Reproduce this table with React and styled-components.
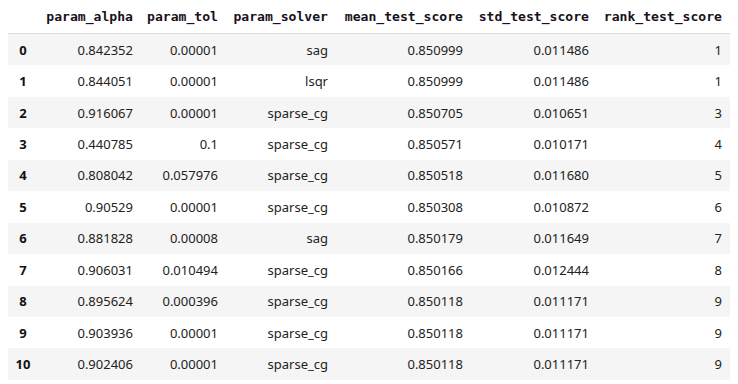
import React from "react";
import styled, { createGlobalStyle } from "styled-components";

const rows = [
	[0, "0.842352", "0.00001", "sag", "0.850999", "0.011486", 1],
	[1, "0.844051", "0.00001", "lsqr", "0.850999", "0.011486", 1],
	[2, "0.916067", "0.00001", "sparse_cg", "0.850705", "0.010651", 3],
	[3, "0.440785", "0.1", "sparse_cg", "0.850571", "0.010171", 4],
	[4, "0.808042", "0.057976", "sparse_cg", "0.850518", "0.011680", 5],
	[5, "0.90529", "0.00001", "sparse_cg", "0.850308", "0.010872", 6],
	[6, "0.881828", "0.00008", "sag", "0.850179", "0.011649", 7],
	[7, "0.906031", "0.010494", "sparse_cg", "0.850166", "0.012444", 8],
	[8, "0.895624", "0.000396", "sparse_cg", "0.850118", "0.011171", 9],
	[9, "0.903936", "0.00001", "sparse_cg", "0.850118", "0.011171", 9],
	[10, "0.902406", "0.00001", "sparse_cg", "0.850118", "0.011171", 9],
];

const columns = [
	{ name: "", width: 30 },
	{ name: "param_alpha", width: 103 },
	{ name: "param_tol", width: 85 },
	{ name: "param_solver", width: 110 },
	{ name: "mean_test_score", width: 135 },
	{ name: "std_test_score", width: 126 },
	{ name: "rank_test_score", width: 133 },
];

const GlobalStyle = createGlobalStyle`
	html, body {
		margin: 0;
		background: #fff;
	}
	body {
		padding: 0 8px;
		font-family: "Noto Sans", "Open Sans", sans-serif;
	}
`;

const App = () => {
	return (
		<>
			<GlobalStyle />
			<Table>
				<colgroup>
					{columns.map((c, i) => (
						<col key={i} style={{ width: c.width }} />
					))}
				</colgroup>
				<thead>
					<tr>
						{columns.map((c, i) => (
							<Th key={i}>{c.name}</Th>
						))}
					</tr>
				</thead>
				<tbody>
					{rows.map((r, i) => (
						<Row key={i} $striped={i % 2 === 0}>
							<IndexCell>{r[0]}</IndexCell>
							{r.slice(1).map((v, j) => (
								<Td key={j}>{v}</Td>
							))}
						</Row>
					))}
				</tbody>
			</Table>
		</>
	);
};

export default App;

const Table = styled.table`
	width: 722px;
	table-layout: fixed;
	border-collapse: collapse;
	border-spacing: 0;
`;

const Th = styled.th`
	height: 33px;
	padding: 0 8px 0 0;
	text-align: right;
	vertical-align: middle;
	font-family: "DejaVu Sans Mono", "Liberation Mono", monospace;
	font-size: 13.1px;
	font-weight: bold;
	color: #1a1020;
	border-bottom: 1px solid #dcdcdc;
	white-space: nowrap;
`;

const Row = styled.tr`
	background: ${(p) => (p.$striped ? "#f5f5f5" : "#fff")};
`;

const Td = styled.td`
	height: 31.45px;
	padding: 0 8px 0 0;
	text-align: right;
	vertical-align: middle;
	font-size: 13px;
	color: #222;
	white-space: nowrap;
`;

const IndexCell = styled(Td)`
	padding: 0;
	text-align: center;
	font-weight: bold;
	color: #111;
`;
